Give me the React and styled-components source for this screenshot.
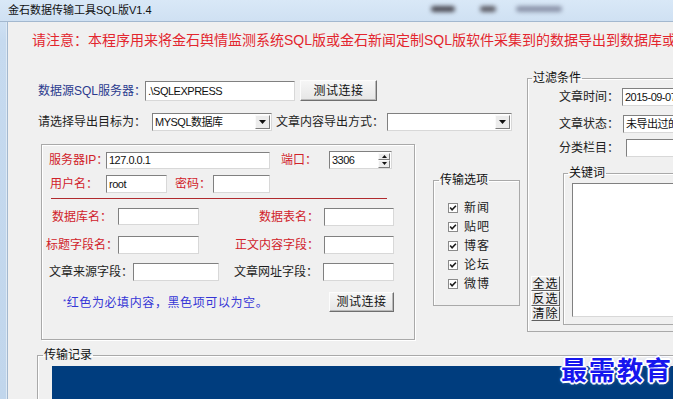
import React from "react";
import styled, { createGlobalStyle } from "styled-components";

const UI = `"Liberation Sans", "Noto Sans CJK SC", sans-serif`;
const NARROW = `"Liberation Sans", "Noto Sans CJK SC", sans-serif`;

const tones = {
  black: "#1e1e1e",
  red: "#d0222a",
  navy: "#2b3a8e",
  blue: "#3535d6",
};

const Global = createGlobalStyle`
  html, body { margin: 0; padding: 0; background: #fff; }
  body { width: 685px; height: 399px; overflow: hidden; font-family: ${UI}; }
  * { box-sizing: border-box; }
`;

const Page = styled.div`
  display: flex;
  width: 685px;
  height: 399px;
  background: #fff;
`;

const Window = styled.div`
  flex: none;
  width: 673px;
  height: 399px;
  display: flex;
  flex-direction: column;
  overflow: hidden;
  background: linear-gradient(180deg, #d9e8f7 0px, #c6daef 40px, #c1d6ec 100%);
`;

const TitleBar = styled.div`
  flex: none;
  height: 22px;
  display: flex;
  align-items: center;
  padding-left: 8px;
  font-size: 11px;
  line-height: 14px;
  color: #111;
  border-bottom: 1px solid #a3b8cf;
`;

const TitleText = styled.span`
  margin-top: -1px;
`;

const Blur = styled.span`
  flex: none;
  display: inline-block;
  width: ${(p) => p.$w}px;
  height: ${(p) => p.$h}px;
  margin-left: ${(p) => p.$ml}px;
  margin-top: -4px;
  background: ${(p) => p.$c};
  filter: blur(2px);
  border-radius: 3px;
`;

const Body = styled.div`
  flex: 1;
  min-height: 0;
  display: flex;
`;

const SideFrame = styled.div`
  flex: none;
  width: 8px;
  border-right: 1px solid #a3b8cf;
  box-shadow: inset -1px 0 0 #dde9f5;
`;

const Client = styled.div`
  flex: 1;
  min-width: 0;
  position: relative;
  overflow: hidden;
  background: #f0f0f0;
  display: flex;
  flex-direction: column;
  font-size: 12px;
  line-height: 16px;
  color: ${tones.black};
`;

const Notice = styled.div`
  flex: none;
  margin: 10px 0 0 24px;
  height: 16px;
  font-size: 14px;
  line-height: 16px;
  white-space: nowrap;
  color: #e3262e;
`;

const Main = styled.div`
  flex: none;
  display: flex;
  align-items: flex-start;
  margin-top: 23px;
`;

const LeftCol = styled.div`
  flex: none;
  width: 511px;
  padding-top: 9px;
  display: flex;
  flex-direction: column;
`;

const Row = styled.div`
  flex: none;
  display: flex;
  align-items: center;
  height: ${(p) => p.$h || 18}px;
  margin-top: ${(p) => p.$mt || 0}px;
  padding-left: ${(p) => p.$pl || 0}px;
`;

const Label = styled.span`
  flex: ${(p) => (p.$grow ? "1" : "none")};
  width: ${(p) => (p.$w ? `${p.$w}px` : "auto")};
  margin-left: ${(p) => p.$ml || 0}px;
  padding-right: ${(p) => (p.$grow ? 5 : 0)}px;
  text-align: ${(p) => (p.$grow ? "right" : "left")};
  white-space: nowrap;
  font-size: 12px;
  line-height: 16px;
  color: ${(p) => tones[p.$tone || "black"]};
`;

const Field = styled.div`
  flex: none;
  width: ${(p) => p.$w}px;
  height: ${(p) => p.$h || 18}px;
  margin-left: ${(p) => p.$ml || 0}px;
  background: #fff;
  border: 1px solid;
  border-color: #808080 #d8d8d8 #d8d8d8 #808080;
  padding: 0 2px;
  display: flex;
  align-items: center;
  font-family: ${NARROW};
  font-size: 11px;
  letter-spacing: -0.5px;
  color: #111;
  white-space: nowrap;
  overflow: hidden;
`;

const Combo = styled(Field)`
  padding-right: 1px;
  justify-content: space-between;
`;

const DropBtn = styled.span`
  flex: none;
  width: 15px;
  height: 14px;
  background: #ececec;
  border: 1px solid;
  border-color: #fafafa #7d7d7d #7d7d7d #fafafa;
  display: flex;
  align-items: center;
  justify-content: center;
`;

const SpinCol = styled.span`
  flex: none;
  width: 12px;
  height: 15px;
  display: flex;
  flex-direction: column;
`;

const SpinHalf = styled.span`
  flex: 1;
  background: #ececec;
  border: 1px solid;
  border-color: #fafafa #7d7d7d #7d7d7d #fafafa;
  display: flex;
  align-items: center;
  justify-content: center;
`;

const Button = styled.button`
  flex: none;
  width: ${(p) => p.$w}px;
  height: ${(p) => p.$h || 21}px;
  margin-left: ${(p) => (p.$auto ? "auto" : `${p.$ml || 0}px`)};
  padding: 0;
  background: linear-gradient(180deg, #f6f6f6, #e6e6e6);
  border: 1px solid;
  border-color: #fcfcfc #6f6f6f #6f6f6f #fcfcfc;
  box-shadow: inset -1px -1px 0 #b9b9b9;
  font-family: ${UI};
  font-size: 12px;
  line-height: 14px;
  color: #111;
  letter-spacing: 0.5px;
`;

const BottomRow = styled.div`
  flex: none;
  display: flex;
  align-items: flex-start;
  margin-top: 13px;
  padding-left: 33px;
`;

const DbBox = styled.div`
  flex: none;
  width: 374px;
  height: 196px;
  border: 1px solid #a9a9a9;
  box-shadow: inset 1px 1px 0 #fff, 1px 1px 0 #fff;
  padding: 6px 20px 0 0;
  display: flex;
  flex-direction: column;
`;

const RedRule = styled.div`
  flex: none;
  height: 1px;
  margin: 5px 7px 0 9px;
  background: #b02a2e;
`;

const Note = styled.span`
  margin-left: 21px;
  font-size: 12px;
  color: ${tones.blue};
  white-space: nowrap;
  letter-spacing: 0.6px;
`;

const Star = styled.span`
  font-size: 8px;
  vertical-align: 3px;
`;

const Group = styled.fieldset`
  flex: none;
  margin: ${(p) => p.$m || "0"};
  padding: 0;
  min-width: 0;
  width: ${(p) => p.$w}px;
  height: ${(p) => p.$h}px;
  border: 1px solid #a9a9a9;
  box-shadow: inset 1px 1px 0 #fff;
`;

const Legend = styled.legend`
  margin-left: ${(p) => p.$ml || 5}px;
  padding: 0 1px;
  height: 14px;
  font-size: 12px;
  line-height: 14px;
  color: #111;
`;

const CheckList = styled.div`
  display: flex;
  flex-direction: column;
  gap: 3px;
  padding: 13px 0 0 14px;
`;

const CheckItem = styled.label`
  display: flex;
  align-items: center;
  gap: 6px;
  height: 16px;
  font-size: 12px;
  letter-spacing: 1px;
  color: #222;
`;

const FilterForm = styled.div`
  display: flex;
  flex-direction: column;
  padding-top: 3px;
`;

const FilterRow = styled.div`
  display: flex;
  align-items: center;
  height: 18px;
  margin-top: ${(p) => p.$mt || 0}px;
`;

const FilterLabel = styled.span`
  flex: none;
  width: 94px;
  padding-right: 3px;
  text-align: right;
  font-size: 12px;
  color: #222;
  white-space: nowrap;
`;

const KeywordArea = styled.div`
  display: flex;
  align-items: flex-end;
  gap: 3px;
  margin-top: 9px;
  padding-left: 3px;
`;

const SmallBtns = styled.div`
  flex: none;
  display: flex;
  flex-direction: column;
  margin-bottom: 4px;
`;

const SmallBtn = styled.button`
  width: 29px;
  height: 15px;
  padding: 0;
  background: #ececec;
  border: 1px solid;
  border-color: #fdfdfd #5f5f5f #5f5f5f #fdfdfd;
  font-family: ${UI};
  font-size: 12px;
  line-height: 12px;
  color: #111;
  letter-spacing: 1px;
`;

const KeywordText = styled.div`
  margin: 3px 0 0 8px;
  width: 120px;
  height: 134px;
  background: #fff;
  border: 1px solid;
  border-color: #808080 #d8d8d8 #d8d8d8 #808080;
`;

const Console = styled.div`
  margin: 4px 0 0 14px;
  height: 60px;
  background: #003d7e;
`;

const Watermark = styled.div`
  position: absolute;
  right: 0;
  top: 331px;
  font-family: "Noto Sans CJK SC", sans-serif;
  font-weight: 700;
  font-size: 26px;
  line-height: 32px;
  letter-spacing: 2px;
  color: #1616ee;
  text-shadow: -2px 0 0 #fff, 2px 0 0 #fff, 0 -2px 0 #fff, 0 2px 0 #fff,
    -1px -1px 0 #fff, 1px -1px 0 #fff, -1px 1px 0 #fff, 1px 1px 0 #fff,
    0 0 4px #9fb4ff;
`;

const Arrow = ({ up }) => (
  <svg width="7" height="4" viewBox="0 0 7 4">
    <path d={up ? "M0 4 L3.5 0 L7 4 Z" : "M0 0 L7 0 L3.5 4 Z"} fill="#111" />
  </svg>
);

const SmallArrow = ({ up }) => (
  <svg width="5" height="3" viewBox="0 0 5 3">
    <path d={up ? "M0 3 L2.5 0 L5 3 Z" : "M0 0 L5 0 L2.5 3 Z"} fill="#111" />
  </svg>
);

const CheckBox = () => (
  <svg width="10" height="10" viewBox="0 0 10 10">
    <rect x="0.5" y="0.5" width="9" height="9" fill="#fff" stroke="#8a8a8a" />
    <path d="M2.2 4.6 L4.1 6.9 L7.9 2.8" fill="none" stroke="#1a1a1a" strokeWidth="1.6" />
  </svg>
);

const options = ["新闻", "贴吧", "博客", "论坛", "微博"];

export default function App() {
  return (
    <>
      <Global />
      <Page>
        <Window>
          <TitleBar>
            <TitleText>金石数据传输工具SQL版V1.4</TitleText>
            <Blur $w={24} $h={6} $ml={279} $c="#4c4c55" />
            <Blur $w={16} $h={6} $ml={25} $c="#5d5d66" />
            <Blur $w={46} $h={6} $ml={20} $c="#8a93a8" />
          </TitleBar>
          <Body>
            <SideFrame />
            <Client>
              <Notice>
                请注意：本程序用来将金石舆情监测系统SQL版或金石新闻定制SQL版软件采集到的数据导出到数据库或文件中
              </Notice>
              <Main>
                <LeftCol>
                  <Row $h={21} $pl={30}>
                    <Label $w={107} $tone="navy">数据源SQL服务器：</Label>
                    <Field $w={150} $h={20}>.\SQLEXPRESS</Field>
                    <Button $w={77} $ml={5}>测试连接</Button>
                  </Row>
                  <Row $mt={12} $pl={30}>
                    <Label $w={114}>请选择导出目标为：</Label>
                    <Combo $w={120}>
                      MYSQL数据库
                      <DropBtn><Arrow /></DropBtn>
                    </Combo>
                    <Label $w={111} $ml={4}>文章内容导出方式：</Label>
                    <Combo $w={125}>
                      <span />
                      <DropBtn><Arrow /></DropBtn>
                    </Combo>
                  </Row>
                  <BottomRow>
                    <DbBox>
                      <Row>
                        <Label $w={57} $ml={7} $tone="red">服务器IP：</Label>
                        <Field $w={164} $h={17}>127.0.0.1</Field>
                        <Label $w={48} $ml={11} $tone="red">端口：</Label>
                        <Combo $w={63}>
                          3306
                          <SpinCol>
                            <SpinHalf><SmallArrow up /></SpinHalf>
                            <SpinHalf><SmallArrow /></SpinHalf>
                          </SpinCol>
                        </Combo>
                      </Row>
                      <Row $mt={6}>
                        <Label $w={56} $ml={8} $tone="red">用户名：</Label>
                        <Field $w={61}>root</Field>
                        <Label $w={38} $ml={8} $tone="red">密码：</Label>
                        <Field $w={57} />
                      </Row>
                      <RedRule />
                      <Row $mt={9} $h={17}>
                        <Label $w={66} $ml={10} $tone="red">数据库名：</Label>
                        <Field $w={81} $h={17} />
                        <Label $grow $tone="red">数据表名：</Label>
                        <Field $w={70} />
                      </Row>
                      <Row $mt={11}>
                        <Label $w={72} $ml={4} $tone="red">标题字段名：</Label>
                        <Field $w={81} />
                        <Label $grow $tone="red">正文内容字段：</Label>
                        <Field $w={70} />
                      </Row>
                      <Row $mt={9}>
                        <Label $w={84} $ml={7}>文章来源字段：</Label>
                        <Field $w={86} />
                        <Label $grow>文章网址字段：</Label>
                        <Field $w={71} />
                      </Row>
                      <Row $mt={11} $h={20}>
                        <Note><Star>*</Star>红色为必填内容，黑色项可以为空。</Note>
                        <Button $w={65} $h={20} $auto>测试连接</Button>
                      </Row>
                    </DbBox>
                    <Group $w={87} $h={133} $m="29px 0 0 18px">
                      <Legend>传输选项</Legend>
                      <CheckList>
                        {options.map((o) => (
                          <CheckItem key={o}>
                            <CheckBox />
                            {o}
                          </CheckItem>
                        ))}
                      </CheckList>
                    </Group>
                  </BottomRow>
                </LeftCol>
                <Group $w={170} $h={261} $m="0 0 0 8px">
                  <Legend $ml={4}>过滤条件</Legend>
                  <FilterForm>
                    <FilterRow>
                      <FilterLabel>文章时间：</FilterLabel>
                      <Field $w={70}>2015-09-07</Field>
                    </FilterRow>
                    <FilterRow $mt={9}>
                      <FilterLabel>文章状态：</FilterLabel>
                      <Field $w={70} $ml={1}>未导出过的</Field>
                    </FilterRow>
                    <FilterRow $mt={6}>
                      <FilterLabel>分类栏目：</FilterLabel>
                      <Field $w={70} $ml={4} />
                    </FilterRow>
                  </FilterForm>
                  <KeywordArea>
                    <SmallBtns>
                      <SmallBtn>全选</SmallBtn>
                      <SmallBtn>反选</SmallBtn>
                      <SmallBtn>清除</SmallBtn>
                    </SmallBtns>
                    <Group $w={130} $h={159}>
                      <Legend $ml={4}>关键词</Legend>
                      <KeywordText />
                    </Group>
                  </KeywordArea>
                </Group>
              </Main>
              <Group $w={660} $h={100} $m="8px 0 0 29px">
                <Legend>传输记录</Legend>
                <Console />
              </Group>
              <Watermark>最需教育</Watermark>
            </Client>
          </Body>
        </Window>
      </Page>
    </>
  );
}
